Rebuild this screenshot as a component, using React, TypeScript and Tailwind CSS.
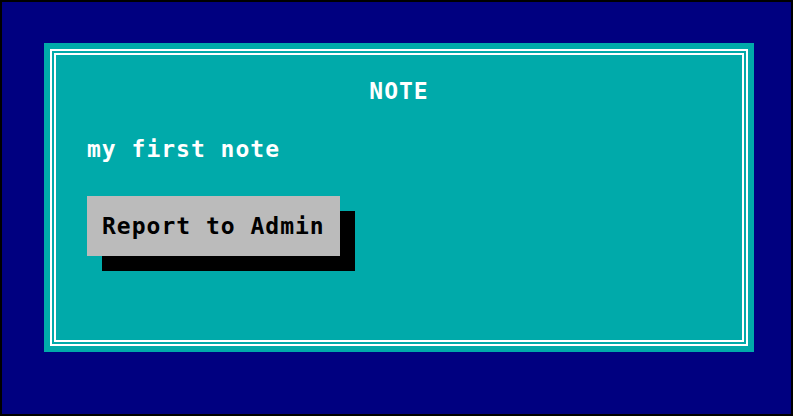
export default function App() {
  return (
    <div className="w-[793px] h-[416px] bg-[#000080] border-2 border-black pt-[41px] pl-[42px] font-['DejaVu_Sans_Mono',monospace] font-bold">
      <div className="w-[710px] h-[309px] bg-[#00aaaa] p-[6px]">
        <div className="h-full border-[6px] border-double border-white pt-[22px] pl-[31px]">
          <h1 className="text-center pr-[31px] text-[23px] leading-[28px] tracking-[1px] text-white">
            NOTE
          </h1>
          <p className="mt-[30px] text-[23px] leading-[28px] tracking-[1px] text-white">
            my first note
          </p>
          <button className="mt-[33px] w-[253px] h-[60px] bg-[#bbbbbb] pl-[15px] text-left text-[23px] leading-[28px] tracking-[1px] text-black shadow-[15px_15px_0_0_#000]">
            Report to Admin
          </button>
        </div>
      </div>
    </div>
  );
}
